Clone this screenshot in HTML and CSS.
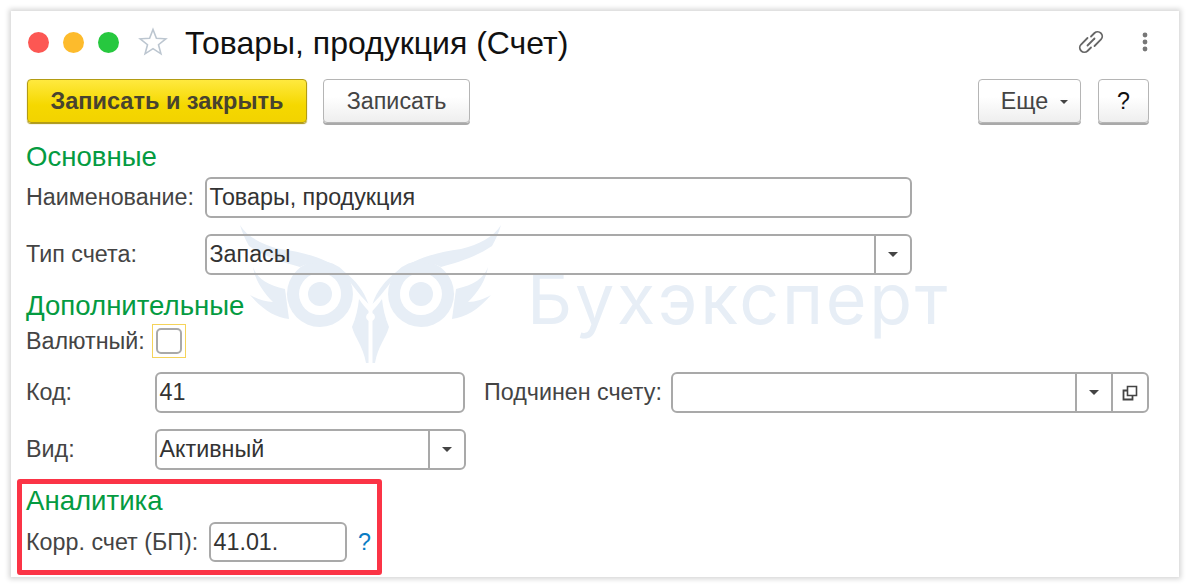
FILE: index.html
```html
<!DOCTYPE html>
<html lang="ru">
<head>
<meta charset="utf-8">
<title>Товары, продукция (Счет)</title>
<link rel="stylesheet" href="styles.css">
</head>
<body>
<main class="window">
  <svg class="watermark-logo" viewBox="0 0 270 150" aria-hidden="true">
    <defs>
      <g id="owl-half" fill="#e7eef6">
        <path fill-rule="evenodd" d="M85 41 A33 33 0 1 1 84.9 107 A33 33 0 1 1 85 41 Z M85 53 A21 21 0 1 0 85.1 95 A21 21 0 1 0 85 53 Z"/>
        <circle cx="85" cy="74" r="12"/>
        <path d="M5 5 C12 17 28 25 45 29 C85 34 122 50 133.5 84 L126 76 L118 66 C105 45 80 38 65 47 C50 43 30 37 14 26 C10 19 7 12 5 5 Z"/>
        <path d="M18 47 C22 58 32 65 50 69 L54 99 C40 97 28 90 15 75 C22 79 30 82 38 82 C28 72 20 60 18 47 Z"/>
        <path d="M124 79 C127 84 131 88 133.5 91 L133.5 93 A4.5 4.5 0 0 0 133.5 101 L133.5 143 L131 143 C128 126 120 118 117 107 C121 98 123 88 124 79 Z"/>
      </g>
    </defs>
    <use href="#owl-half"/>
    <use href="#owl-half" transform="translate(271 0) scale(-1 1)"/>
  </svg>
  <div class="watermark-text">Бухэксперт</div>

  <header class="titlebar">
    <span class="light light-red"></span>
    <span class="light light-yellow"></span>
    <span class="light light-green"></span>
    <svg class="star" viewBox="0 0 30 30" aria-hidden="true"><path d="M15 2.5 L18.4 11.2 L27.8 11.8 L20.5 17.7 L22.9 26.8 L15 21.7 L7.1 26.8 L9.5 17.7 L2.2 11.8 L11.6 11.2 Z" fill="none" stroke="#bcc6d0" stroke-width="1.6"/></svg>
    <h1 class="title">Товары, продукция (Счет)</h1>
    <svg class="link-icon" viewBox="0 0 26 26" aria-hidden="true"><g fill="none" stroke="#666" stroke-width="1.8" stroke-linecap="round"><path d="M13 7.5 L16.5 4 A4.6 4.6 0 0 1 23 10.5 L16.5 17"/><path d="M13 18.5 L9.5 22 A4.6 4.6 0 0 1 3 15.5 L9.5 9"/><path d="M9.5 16.5 L16.5 9.5"/></g></svg>
    <svg class="menu-icon" viewBox="0 0 6 20" aria-hidden="true"><g fill="#777"><circle cx="3" cy="3" r="2.4"/><circle cx="3" cy="10" r="2.4"/><circle cx="3" cy="17" r="2.4"/></g></svg>
  </header>

  <div class="toolbar">
    <button class="btn btn-primary">Записать и закрыть</button>
    <button class="btn btn-save">Записать</button>
    <span class="toolbar-gap"></span>
    <button class="btn btn-more">Еще<i class="arrow arrow-small"></i></button>
    <button class="btn btn-help">?</button>
  </div>

  <h2 class="group group-main">Основные</h2>
  <div class="row row-name">
    <label class="label label-main">Наименование:</label>
    <div class="field field-main"><span class="value">Товары, продукция</span></div>
  </div>
  <div class="row row-type">
    <label class="label label-main">Тип счета:</label>
    <div class="field field-main"><span class="value">Запасы</span><span class="cell"><i class="arrow"></i></span></div>
  </div>

  <h2 class="group group-extra">Дополнительные</h2>
  <div class="row row-currency">
    <label class="label label-currency">Валютный:</label>
    <span class="check-focus"><span class="check"></span></span>
  </div>
  <div class="row row-code">
    <label class="label label-short">Код:</label>
    <div class="field field-code"><span class="value">41</span></div>
    <label class="label label-parent">Подчинен счету:</label>
    <div class="field field-parent">
      <span class="value"></span>
      <span class="cell"><i class="arrow"></i></span>
      <span class="cell"><svg viewBox="0 0 18 18" class="open-icon" aria-hidden="true"><path d="M6.5 2.5 H15.5 V11.5 H6.5 Z" fill="none" stroke="#444" stroke-width="1.6"/><path d="M6 6.5 H2.5 V15.5 H11.5 V12" fill="none" stroke="#444" stroke-width="1.8"/></svg></span>
    </div>
  </div>
  <div class="row row-kind">
    <label class="label label-short">Вид:</label>
    <div class="field field-kind"><span class="value">Активный</span><span class="cell"><i class="arrow"></i></span></div>
  </div>

  <section class="analytics">
    <h2 class="group group-analytics">Аналитика</h2>
    <div class="row row-corr">
      <label class="label label-corr">Корр. счет (БП):</label>
      <div class="field field-corr"><span class="value">41.01.</span></div>
      <span class="hint">?</span>
    </div>
  </section>
</main>
</body>
</html>
```

FILE: styles.css
```css
* { box-sizing: border-box; }
html, body { margin: 0; padding: 0; background: #fff; }
body { width: 1190px; height: 588px; overflow: hidden; padding: 11px; font-family: "Liberation Sans", Arial, sans-serif; color: #3f3f3f; }

.window {
  position: relative;
  isolation: isolate;
  width: 1168px;
  height: 566px;
  background: #fff;
  box-shadow: 0 0 5px 2px rgba(0,0,0,.17);
  padding: 0 30px 0 15px;
}

.watermark-logo { position: absolute; z-index: -1; left: 224px; top: 209px; width: 270px; height: 150px; }
.watermark-text { position: absolute; z-index: -1; left: 516px; top: 247px; font-family: Inter, "Liberation Sans", sans-serif; font-size: 70px; letter-spacing: 2.7px; line-height: 82px; color: #e7eef6; white-space: nowrap; }

.titlebar { position: relative; display: flex; align-items: center; height: 62px; }
.light { width: 21px; height: 21px; border-radius: 50%; margin-right: 14px; flex: none; }
.light:first-child { margin-left: 2px; }
.light-red { background: #fc5753; }
.light-yellow { background: #fdbb2c; }
.light-green { background: #27c83f; }
.star { width: 30px; height: 30px; margin-left: 5px; flex: none; }
.title { margin: 3px 0 0 17px; font-size: 32px; font-weight: 400; color: #111; flex: 1; white-space: nowrap; }
.link-icon { width: 26px; height: 26px; flex: none; margin-right: 38px; }
.menu-icon { width: 6px; height: 20px; flex: none; margin-right: 1px; }

.toolbar { display: flex; height: 45px; margin-top: 6px; padding-left: 1px; }
.toolbar-gap { flex: 1; }
.btn {
  height: 44px;
  padding: 0;
  font-family: inherit;
  font-size: 23.3px;
  color: #444;
  border: 1px solid #b5b5b5;
  border-radius: 4px;
  background: linear-gradient(#fff 40%, #eeeeee);
  box-shadow: 0 2px 0 #a9a9a9;
}
.btn-primary { width: 280px; margin-right: 16px; font-size: 23.5px; font-weight: 700; color: #48432f; border-color: #b39c13; background: linear-gradient(#ffe93f, #f5d800 60%, #f2d300); box-shadow: 0 1px 1px #a89310; }
.btn-save { width: 147px; }
.btn-more { width: 103px; margin-right: 17px; padding-left: 10px; }
.btn-help { width: 51px; color: #111; }
.arrow { display: inline-block; width: 0; height: 0; border: 5px solid transparent; border-top: 5px solid #444; border-bottom: 0; vertical-align: middle; }
.arrow-small { border-width: 4px; border-top-width: 4px; border-bottom: 0; margin-left: 12px; }

.group { margin: 0; font-size: 27.6px; line-height: 30px; font-weight: 400; color: #049b41; }
.group-main { margin-top: 18px; }
.group-extra { margin-top: 16px; }

.row { display: flex; align-items: center; height: 41px; font-size: 23.3px; }
.label { color: #444; white-space: nowrap; flex: none; }
.label-main { width: 179px; }
.label-short { width: 129px; }
.label-currency { width: 126px; }
.label-parent { margin-left: 19px; width: 187px; }
.label-corr { width: 183px; }

.field {
  display: flex;
  height: 41px;
  flex: none;
  border: 2px solid #a9a9a9;
  border-radius: 6px;
  overflow: hidden;
  color: #333;
}
.value { flex: 1; line-height: 37px; padding-left: 2.5px; white-space: nowrap; }
.cell { width: 36px; flex: none; display: flex; align-items: center; justify-content: center; border-left: 2px solid #a9a9a9; }
.field-main { width: 707px; }
.field-code { width: 310px; }
.field-parent { width: 478px; }
.field-kind { width: 311px; }
.field-corr { width: 138px; height: 40px; }

.row-name { margin-top: 5px; }
.row-type { margin-top: 16px; }
.row-currency { height: 34px; margin-top: 3px; }
.row-code { margin-top: 14px; }
.row-kind { margin-top: 16px; }

.check-focus { display: flex; align-items: center; justify-content: center; width: 34px; height: 34px; border: 1px solid #f5d35a; }
.check { width: 26px; height: 26px; border: 2px solid #a9a9a9; border-radius: 5px; }
.open-icon { width: 18px; height: 18px; }

.analytics {
  width: 365px;
  height: 96px;
  margin: 9px 0 0 -9px;
  padding: 2px 0 0 4px;
  border: 5px solid #fb3446;
  border-radius: 3px;
}
.row-corr { margin-top: 6px; height: 40px; }
.hint { margin-left: 11px; color: #0a7cc4; }
```
